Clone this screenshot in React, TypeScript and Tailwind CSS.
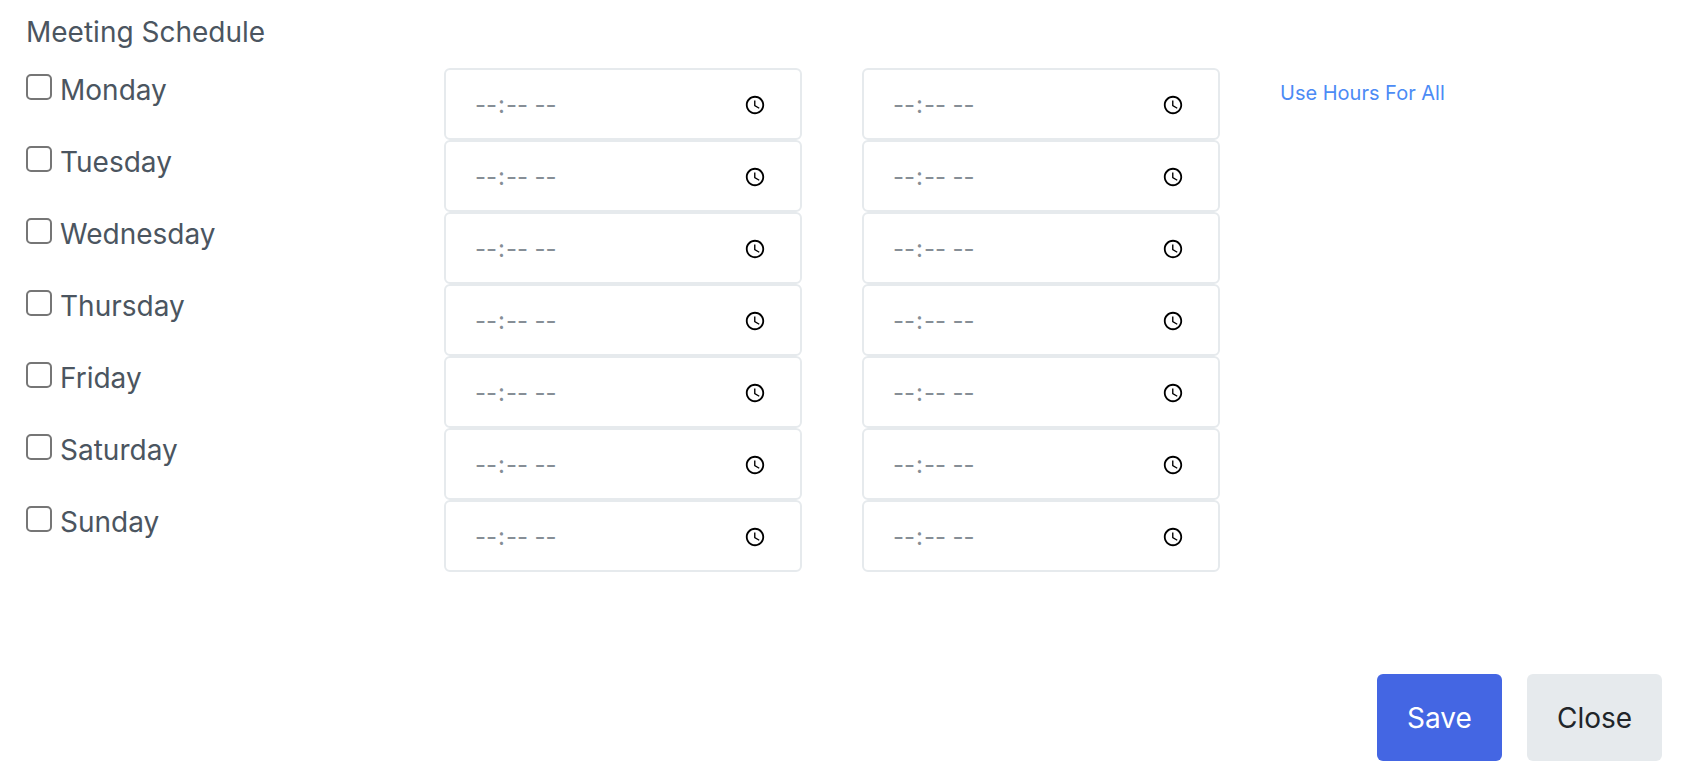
import React from "react";

const days = ["Monday", "Tuesday", "Wednesday", "Thursday", "Friday", "Saturday", "Sunday"];

const TimeInput: React.FC = () => (
  <input
    type="time"
    className="w-[358px] h-[72px] border-2 border-[#e6eaed] rounded-[6px] bg-white pl-[28px] pr-[34px] pt-[1px] text-[24px] text-[#868e96] outline-none [&::-webkit-calendar-picker-indicator]:w-[22px] [&::-webkit-calendar-picker-indicator]:h-[22px] [&::-webkit-calendar-picker-indicator]:p-0 [&::-webkit-calendar-picker-indicator]:m-0"
  />
);

const App: React.FC = () => {
  return (
    <div className="w-full h-[778px] bg-white flex flex-col font-['Inter',sans-serif] px-[26px] overflow-hidden">
      <h2 className="text-[28px] leading-[32px] text-[#4b5560] font-normal pt-[16px] h-[68px]">
        Meeting Schedule
      </h2>
      <div className="flex">
        <div className="w-[418px] flex flex-col">
          {days.map((day) => (
            <label key={day} className="h-[72px] flex items-start gap-[8px] text-[#4b5560] text-[28px] leading-[36px] pt-[2px]">
              <input type="checkbox" className="appearance-none w-[26px] h-[26px] m-0 mt-[4px] border-2 border-[#767676] rounded-[5px] bg-white" />
              <span className="font-normal relative top-[2px]">{day}</span>
            </label>
          ))}
        </div>
        <div className="w-[418px] flex flex-col">
          {days.map((day) => (
            <TimeInput key={day} />
          ))}
        </div>
        <div className="w-[418px] flex flex-col">
          {days.map((day) => (
            <TimeInput key={day} />
          ))}
        </div>
        <div className="pt-[10px]">
          <a className="text-[20px] leading-[30px] text-[#4c8bf5]">Use Hours For All</a>
        </div>
      </div>
      <div className="flex justify-end gap-[25px] mt-[102px] mr-[-4px]">
        <button className="w-[125px] h-[87px] rounded-[6px] bg-[#4466e3] text-white text-[28px]">Save</button>
        <button className="w-[135px] h-[87px] rounded-[6px] bg-[#e6eaed] text-[#212529] text-[28px]">Close</button>
      </div>
    </div>
  );
};

export default App;
